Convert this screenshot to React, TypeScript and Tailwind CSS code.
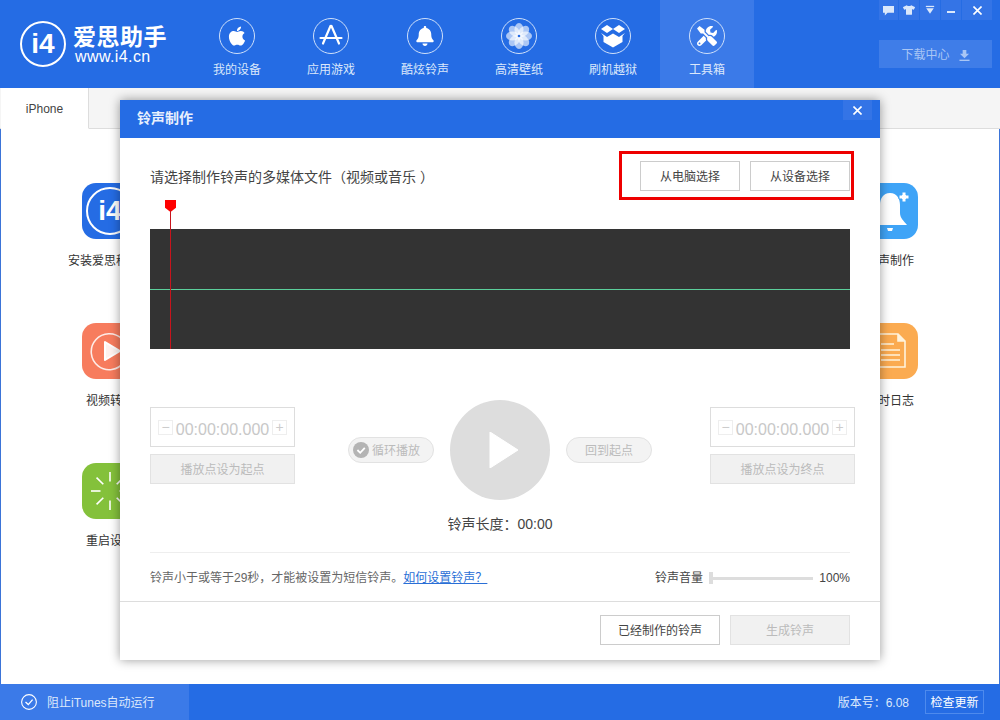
import type { ReactNode } from 'react'
import { FaApple, FaBell, FaTools, FaTshirt } from 'react-icons/fa'

// top navigation icons
function AppStoreIcon() {
  return (
    <svg viewBox="0 0 24 24" className="w-[24px] h-[24px]" fill="none" stroke="white" strokeWidth="2.2" strokeLinecap="round">
      <path d="M12.5 2 L20 19.5" />
      <path d="M11.5 2 L4 19.5" />
      <path d="M1.5 14 H22.5" />
    </svg>
  )
}

function FlowerIcon() {
  const petals = [0, 45, 90, 135, 180, 225, 270, 315]
  return (
    <svg viewBox="0 0 24 24" className="w-[26px] h-[26px]">
      {petals.map((deg) => (
        <ellipse key={deg} cx="12" cy="6" rx="4.2" ry="6" fill="white" fillOpacity="0.62" transform={`rotate(${deg} 12 12)`} />
      ))}
      <circle cx="12" cy="12" r="1.2" fill="#256ce4" />
    </svg>
  )
}

function BoxIcon() {
  return (
    <svg viewBox="0 0 26 24" className="w-[26px] h-[24px]" fill="white">
      <path d="M7 1 L13 5 L7 9 L1 5 Z" />
      <path d="M19 1 L25 5 L19 9 L13 5 Z" />
      <path d="M1 9 L7 13 L13 9.5 L19 13 L25 9 L22.5 12 V18 L13 23.5 L3.5 18 V12 Z" />
    </svg>
  )
}

function BubbleIcon() {
  return (
    <svg viewBox="0 0 12 12" className="w-[11px] h-[11px]" fill="#dbe8fb">
      <path d="M0 1 H12 V8.5 H5 L2 11.5 V8.5 H0 Z" />
    </svg>
  )
}

function SkinIcon() {
  return (
    <svg viewBox="0 0 12 10" className="w-[10px] h-[10px]" fill="#dbe8fb">
      <path d="M1 0 H11 V1.5 H1 Z" />
      <path d="M6 9.5 L1.5 3 H10.5 Z" />
    </svg>
  )
}

const navItems: { label: string; icon: ReactNode; active?: boolean }[] = [
  { label: '我的设备', icon: <FaApple className="text-white text-[22px]" /> },
  { label: '应用游戏', icon: <AppStoreIcon /> },
  { label: '酷炫铃声', icon: <FaBell className="text-white text-[20px]" /> },
  { label: '高清壁纸', icon: <FlowerIcon /> },
  { label: '刷机越狱', icon: <BoxIcon /> },
  { label: '工具箱', icon: <FaTools className="text-white text-[20px]" />, active: true },
]

function LogoMark({ className }: { className: string }) {
  return (
    <div className={`rounded-full border-[2px] border-white flex items-center justify-center text-white font-bold font-['Liberation_Sans',sans-serif] ${className}`}>
      i4
    </div>
  )
}

function SpinnerIcon() {
  const rays = [0, 45, 90, 135, 180, 225, 270, 315]
  return (
    <svg viewBox="0 0 38 38" className="w-[38px] h-[38px]" stroke="#fff" strokeWidth="1.6">
      {rays.map((deg) => (
        <line key={deg} x1="19" y1="0" x2="19" y2="9.5" transform={`rotate(${deg} 19 19)`} />
      ))}
    </svg>
  )
}

function PlayRingIcon() {
  return (
    <svg viewBox="0 0 40 40" className="w-[40px] h-[40px]">
      <path d="M32 8 A18 18 0 1 0 34 31" fill="none" stroke="#fff" strokeOpacity="0.85" strokeWidth="1.6" />
      <path d="M15 11 L30 20 L15 29 Z" fill="#fff" fillOpacity="0.9" stroke="#fff" strokeLinejoin="round" strokeWidth="2" />
    </svg>
  )
}

function BellPlusIcon() {
  return (
    <svg viewBox="0 0 40 40" className="w-[40px] h-[40px]" fill="#fff">
      <path d="M20 2 C13 2 10 8 10 14 V22 C10 27 6 30 3 34 H37 C34 30 30 27 30 22 V14 C30 8 27 2 20 2 Z" />
      <path d="M17 37 H23 L22 40 H18 Z" />
      <path d="M32 1 H36 V4 H39 V8 H36 V11 H32 V8 H29 V4 H32 Z" stroke="#3fa4f7" strokeWidth="1" />
    </svg>
  )
}

function DocIcon() {
  return (
    <svg viewBox="0 0 36 40" className="w-[36px] h-[40px]" fill="none" stroke="#fff3dc" strokeWidth="1.6">
      <path d="M4 3 H26 L33 10 V36 H4 Z" />
      <path d="M26 3 V10 H33" fill="#fff3dc" />
      <path d="M9 13 H22 M9 19 H28 M9 24 H28 M9 29 H28" />
    </svg>
  )
}

const leftTools: { label: string; bg: string; icon: ReactNode }[] = [
  { label: '安装爱思移动端', bg: 'bg-[#256ce4]', icon: <LogoMark className="w-[48px] h-[48px] text-[28px]" /> },
  { label: '视频转换', bg: 'bg-[#f77c5e]', icon: <PlayRingIcon /> },
  { label: '重启设备', bg: 'bg-[#84c13b]', icon: <SpinnerIcon /> },
]

const rightTools: { label: string; bg: string; icon: ReactNode }[] = [
  { label: '铃声制作', bg: 'bg-[#3fa4f7]', icon: <BellPlusIcon /> },
  { label: '实时日志', bg: 'bg-[#fbab51]', icon: <DocIcon /> },
]

function ToolColumn({ items }: { items: { label: string; bg: string; icon: ReactNode }[] }) {
  return (
    <div className="w-[112px] flex flex-col">
      {items.map((item) => (
        <div key={item.label} className="h-[140px] flex flex-col items-center">
          <div className={`w-[56px] h-[56px] rounded-[14px] flex items-center justify-center ${item.bg}`}>{item.icon}</div>
          <span className="mt-[14px] leading-[16px] text-[12px] text-[#333]">{item.label}</span>
        </div>
      ))}
    </div>
  )
}

function TimeColumn({ label }: { label: string }) {
  return (
    <div className="w-[145px] pt-[7px] flex flex-col gap-[7px] shrink-0">
      <div className="h-[40px] border border-[#ddd] flex items-center justify-between px-[7px]">
        <span className="w-[15px] h-[15px] border border-[#eee] flex items-center justify-center text-[#ccc] text-[14px] leading-none">−</span>
        <span className="pt-[5px] text-[16px] text-[#c8c8c8] leading-none">00:00:00.000</span>
        <span className="w-[15px] h-[15px] border border-[#eee] flex items-center justify-center text-[#ccc] text-[14px] leading-none">+</span>
      </div>
      <div className="h-[30px] pt-[2px] border border-[#e2e2e2] bg-[#f1f1f1] flex items-center justify-center text-[12px] text-[#bbb]">{label}</div>
    </div>
  )
}

export default function App() {
  return (
    <div className="relative w-[1000px] h-[720px] overflow-hidden bg-white flex flex-col font-['Liberation_Sans','Noto_Sans_CJK_SC',sans-serif]">
      {/* Header */}
      <div className="h-[88px] bg-[#256ce4] flex shrink-0">
        <div className="w-[190px] shrink-0 flex items-center pl-[20px] gap-[7px]">
          <LogoMark className="w-[46px] h-[46px] text-[28px]" />
          <div className="pb-[2px] flex flex-col text-white">
            <span className="text-[23px] leading-[27px] font-bold tracking-[0.5px] font-['Noto_Sans_CJK_SC',sans-serif]">爱思助手</span>
            <span className="pl-[2px] text-[16px] leading-[16px] tracking-[0.4px]">www.i4.cn</span>
          </div>
        </div>
        {navItems.map((item) => (
          <div key={item.label} className={`w-[94px] flex flex-col items-center pt-[18px] ${item.active ? 'bg-[#3b7ae8]' : ''}`}>
            <div className="w-[36px] h-[36px] rounded-full border border-[#cfe0fa] flex items-center justify-center">{item.icon}</div>
            <span className="mt-[8px] text-[12px] leading-[16px] text-[#dbe8fb]">{item.label}</span>
          </div>
        ))}
        <div className="flex-1 flex flex-col items-end pr-[8px]">
          <div className="w-[113px] h-[20px] flex gap-px">
            <div className="w-[19px] bg-[#3474e6] flex items-center justify-center"><BubbleIcon /></div>
            <div className="w-[20px] bg-[#3474e6] flex items-center justify-center"><FaTshirt className="text-[#dbe8fb] text-[12px]" /></div>
            <div className="w-[20px] bg-[#3474e6] flex items-center justify-center"><SkinIcon /></div>
            <div className="w-[20px] bg-[#3474e6] flex items-center justify-center"><div className="w-[8px] h-[2px] mt-[3px] bg-[#dbe8fb]" /></div>
            <div className="flex-1 bg-[#3474e6] flex items-center justify-center">
              <svg viewBox="0 0 10 10" className="w-[9px] h-[9px]" stroke="#fff" strokeWidth="1.8"><path d="M0.5 0.5 L9.5 9.5 M9.5 0.5 L0.5 9.5" /></svg>
            </div>
          </div>
          <div className="mt-[20px] w-[113px] h-[28px] pt-[2px] bg-[#3f7de8] flex items-center justify-center gap-[9px] text-[12px] text-[#a9c6f5]">
            下载中心
            <svg viewBox="0 0 12 12" className="w-[11px] h-[11px]" fill="#a9c6f5"><path d="M4 0 H8 V4 H11 L6 9 L1 4 H4 Z" /><path d="M0.5 10.5 H11.5 V12 H0.5 Z" /></svg>
          </div>
        </div>
      </div>

      {/* Tabs */}
      <div className="h-[41px] bg-[#f5f5f5] border-b border-[#ddd] flex shrink-0 pl-px">
        <div className="w-[88px] h-[41px] pt-[2px] bg-white border-r border-b border-r-[#ddd] border-b-white flex items-center justify-center text-[12px] text-[#444]">iPhone</div>
      </div>

      {/* Tool grid behind the dialog */}
      <div className="flex-1 border-x border-[#3b74d8] flex justify-between px-[53px] pt-[54px]">
        <ToolColumn items={leftTools} />
        <ToolColumn items={rightTools} />
      </div>

      {/* Status bar */}
      <div className="h-[36px] bg-[#256ce4] flex items-center shrink-0">
        <div className="w-[189px] h-full bg-[#3b7ae8] flex items-center pl-[21px] gap-[10px] text-[12px] text-[#dbe8fb]">
          <svg viewBox="0 0 16 16" className="w-[16px] h-[16px]" fill="none" stroke="#fff" strokeWidth="1.1">
            <circle cx="8" cy="8" r="7.4" />
            <path d="M4.5 8 L7.3 10.6 L11.6 5.6" strokeWidth="1.3" />
          </svg>
          <span className="pt-[2px]">阻止iTunes自动运行</span>
        </div>
        <div className="ml-auto flex items-center pr-[16px]">
          <span className="pt-[2px] text-[12px] text-[#dbe8fb]">版本号：6.08</span>
          <span className="ml-[16px] w-[59px] h-[24px] pt-[2px] border border-[#4d8aed] flex items-center justify-center text-[12px] text-white">检查更新</span>
        </div>
      </div>

      {/* Dialog */}
      <div className="absolute left-[120px] top-[100px] w-[760px] h-[560px] bg-white flex flex-col shadow-[0_0_10px_rgba(0,0,0,0.4)]">
        <div className="h-[38px] bg-[#256ce4] flex justify-between shrink-0">
          <span className="pl-[17px] leading-[37px] text-[14px] font-bold text-[#e8f0fd]">铃声制作</span>
          <div className="mr-[8px] w-[29px] h-[20px] bg-[#3474e6] flex items-center justify-center">
            <svg viewBox="0 0 10 10" className="w-[9px] h-[9px]" stroke="#fff" strokeWidth="1.8"><path d="M0.5 0.5 L9.5 9.5 M9.5 0.5 L0.5 9.5" /></svg>
          </div>
        </div>

        <div className="px-[30px] flex flex-col shrink-0">
          <div className="pt-[23px] flex items-center justify-between">
            <span className="pt-[2px] text-[14px] text-[#444]">请选择制作铃声的多媒体文件（视频或音乐<span className="ml-[4px]">）</span></span>
            <div className="flex gap-[10px]">
              <div className="w-[100px] h-[30px] pt-[2px] border border-[#ccc] flex items-center justify-center text-[12px] text-[#444]">从电脑选择</div>
              <div className="w-[100px] h-[30px] pt-[2px] border border-[#ccc] flex items-center justify-center text-[12px] text-[#444]">从设备选择</div>
            </div>
          </div>

          <div className="relative mt-[9px] pt-[29px]">
            <div className="h-[120px] bg-[#333] flex items-center">
              <div className="w-full h-px bg-[#5ccf9c]" />
            </div>
            <div className="absolute left-[15px] top-0 w-[11px] h-[12px] bg-[#f00] [clip-path:polygon(0_0,100%_0,100%_65%,50%_100%,0_65%)]" />
            <div className="absolute left-[20px] top-[10px] bottom-0 w-px bg-[#c8141c]" />
          </div>

          <div className="mt-[51px] w-[705px] h-[100px] flex">
            <TimeColumn label="播放点设为起点" />
            <div className="ml-[53px] mt-[37px] w-[86px] h-[26px] rounded-full border border-[#e2e2e2] bg-[#f3f3f3] flex items-center pl-[4px] gap-[3px] text-[12px] text-[#bbb] shrink-0">
              <svg viewBox="0 0 16 16" className="w-[16px] h-[16px]">
                <circle cx="8" cy="8" r="8" fill="#b4b4b4" />
                <path d="M4.4 8 L7.2 10.8 L11.8 5.8" fill="none" stroke="#fff" strokeWidth="1.8" />
              </svg>
              <span className="pt-[2px]">循环播放</span>
            </div>
            <div className="ml-[16px] w-[100px] h-[100px] rounded-full bg-[#ddd] flex items-center justify-center shrink-0">
              <svg viewBox="0 0 30 36" className="ml-[6px] w-[30px] h-[36px]" fill="#fff"><path d="M2 0 L30 18 L2 36 Z" stroke="#fff" strokeLinejoin="round" strokeWidth="1" /></svg>
            </div>
            <div className="ml-[16px] mt-[37px] w-[86px] h-[26px] pt-[2px] rounded-full border border-[#e2e2e2] bg-[#f3f3f3] flex items-center justify-center text-[12px] text-[#bbb] shrink-0">回到起点</div>
            <div className="ml-[58px]">
              <TimeColumn label="播放点设为终点" />
            </div>
          </div>

          <div className="mt-[14px] h-[20px] flex items-center justify-center text-[14px] text-[#444]">铃声长度：00:00</div>
          <div className="mt-[18px] h-px bg-[#eee]" />

          <div className="h-[48px] pt-[2px] flex items-center text-[12px] text-[#666]">
            <span>铃声小于或等于29秒，才能被设置为短信铃声。</span>
            <span className="text-[#2a6fd6] underline">如何设置铃声？</span>
            <div className="ml-auto flex items-center text-[#444]">
              <span>铃声音量</span>
              <div className="ml-[6px] w-[104px] h-[12px] flex items-center">
                <div className="w-[4px] h-[12px] bg-[#ddd]" />
                <div className="flex-1 h-[3px] bg-[#ddd]" />
              </div>
              <span className="ml-[5px] w-[32px] text-right">100%</span>
            </div>
          </div>
        </div>

        <div className="flex-1 border-t border-[#ddd] flex justify-end gap-[10px] pt-[13px] pr-[30px]">
          <div className="w-[120px] h-[30px] pt-[2px] border border-[#ccc] flex items-center justify-center text-[12px] text-[#444]">已经制作的铃声</div>
          <div className="w-[120px] h-[30px] pt-[2px] border border-[#e2e2e2] bg-[#f1f1f1] flex items-center justify-center text-[12px] text-[#bbb]">生成铃声</div>
        </div>

        {/* Red highlight around the source buttons */}
        <div className="absolute left-[499px] top-[51px] w-[235px] h-[49px] border-[3px] border-[#ee0000]" />
      </div>
    </div>
  )
}
